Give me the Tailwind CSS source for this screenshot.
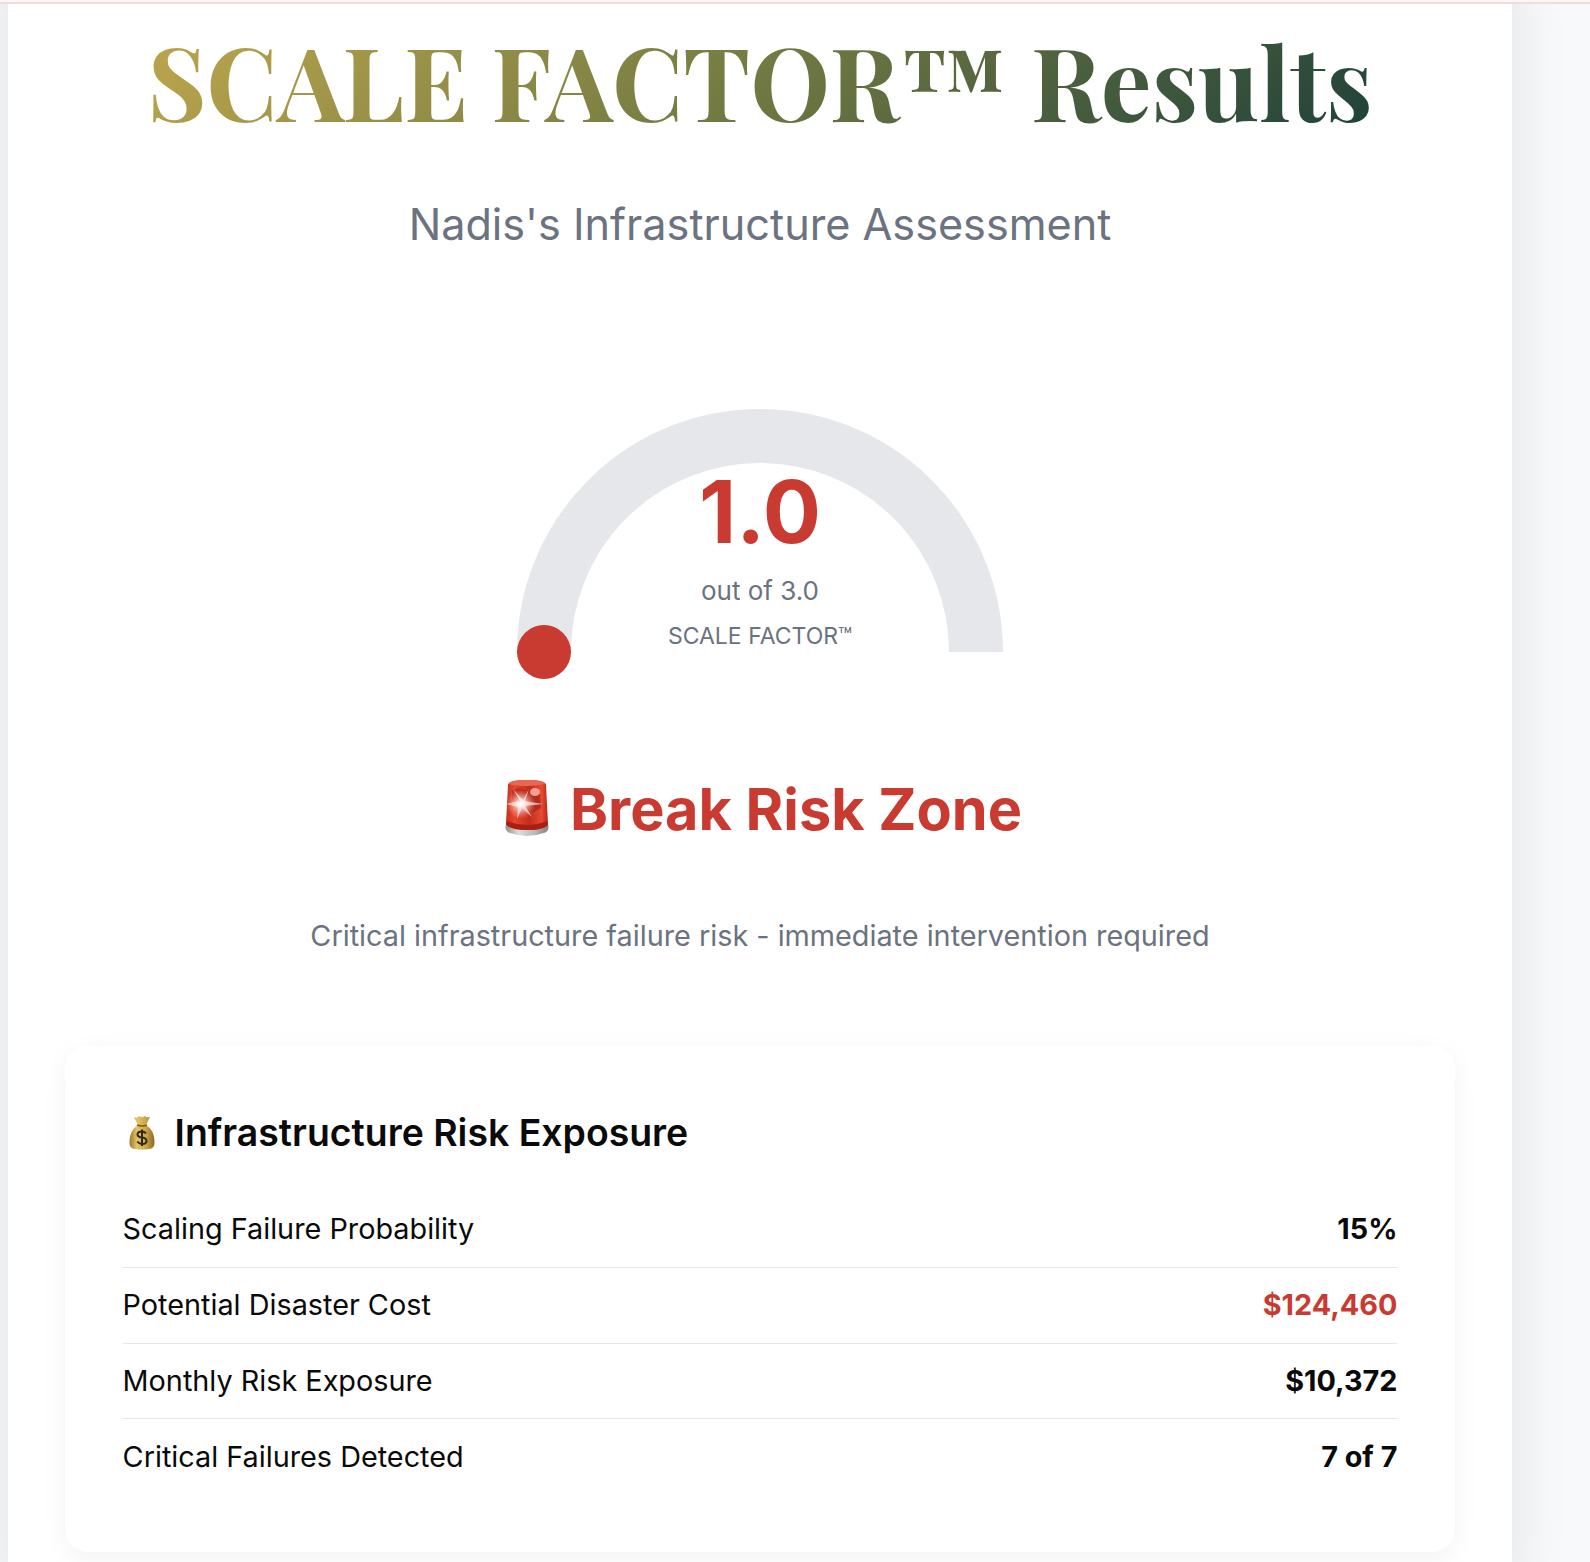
<!DOCTYPE html>
<html lang="en">
<head>
<meta charset="utf-8">
<title>SCALE FACTOR™ Results</title>
<script src="https://cdn.jsdelivr.net/npm/@tailwindcss/browser@4"></script>
</head>
<body class="h-[1562px] overflow-hidden bg-[#f8f9fb] font-[Inter,sans-serif] text-[#0a0a0a]">
<header class="relative z-10 h-1 border-b-2 border-[#f0dde0] bg-[#fdf7f3]"></header>
<main class="-mt-12 ml-2 h-[1606px] w-[1504px] bg-white px-[57px] pt-12 shadow-[0_18px_54px_rgba(0,0,0,0.1)]">
  <h1 class="mb-[53px] bg-[linear-gradient(135deg,#c9ad4e_0%,#727a42_50%,#143a38_100%)] bg-clip-text pt-4 text-center font-['Playfair_Display','Liberation_Serif',serif] text-[100.8px] leading-[121px] font-bold whitespace-nowrap text-transparent">SCALE FACTOR™ Results</h1>
  <p class="text-center text-[43.2px] leading-[60px] text-[#6b7280]">Nadis's Infrastructure Assessment</p>

  <div class="mx-auto mt-[126px] grid h-[320px] w-[540px]">
    <svg class="col-start-1 row-start-1" width="540" height="320" viewBox="0 0 540 320">
      <path d="M54 272A216 216 0 0 1 486 272" fill="none" stroke="#e5e7eb" stroke-width="54"/>
      <circle cx="54" cy="272" r="27" fill="#c93a30"/>
    </svg>
    <div class="col-start-1 row-start-1 pt-[89px] text-center text-[#6b7280]">
      <div class="text-[86.4px] leading-[86px] font-bold text-[#c93a30]">1.0</div>
      <div class="mt-4 text-[26px] leading-[40px]">out of 3.0</div>
      <div class="mt-[7px] text-[23px] leading-[36px]">SCALE FACTOR™</div>
    </div>
  </div>

  <h2 class="mt-[66px] flex items-center justify-center gap-[21px] pl-[7px] text-[57.6px] leading-[86px] font-bold text-[#c93a30]">
    <svg class="-mt-[2px] block" width="44" height="58" viewBox="0 0 44 58">
      <defs>
        <linearGradient id="lamp" x1="0" x2="1"><stop offset="0" stop-color="#c62d18"/><stop offset=".2" stop-color="#e8462e"/><stop offset=".55" stop-color="#c22c1c"/><stop offset=".85" stop-color="#e84a34"/><stop offset="1" stop-color="#b52614"/></linearGradient>
        <linearGradient id="base" x1="0" x2="1"><stop offset="0" stop-color="#8d8f8d"/><stop offset=".3" stop-color="#dcdedb"/><stop offset=".7" stop-color="#b5b8b5"/><stop offset="1" stop-color="#7f817f"/></linearGradient>
        <radialGradient id="glow"><stop offset="0" stop-color="#fff"/><stop offset=".3" stop-color="#ffdcd6" stop-opacity=".85"/><stop offset="1" stop-color="#ff8a76" stop-opacity="0"/></radialGradient>
      </defs>
      <path d="M1 45Q-1 52 5 54Q22 60 39 54Q45 52 43 45Z" fill="url(#base)"/>
      <path d="M3 6Q3 1 22 1Q41 1 41 6L43 45Q40 51 22 51Q4 51 1 45Z" fill="url(#lamp)"/>
      <path d="M2 42Q22 50 42 42L43 45Q40 51 22 51Q4 51 1 45Z" fill="#a91f12"/>
      <path d="M4 5Q5 1 22 1Q39 1 40 5Q32 7 22 7Q10 7 4 5Z" fill="#e86750"/>
      <path d="M7 12Q15 6 22 13Q32 5 35 17L36 29L27 34L14 28L7 20Z" fill="#9c2218" opacity=".6"/>
      <ellipse cx="30" cy="13" rx="5" ry="4" fill="#f0a196"/>
      <circle cx="16" cy="25" r="15" fill="url(#glow)"/>
      <path d="M16 24L8 10L18 21L24 10L20 22L38 25L20 27L27 38L17 29L12 40L13 28L1 25L13 22Z" fill="#fff" opacity=".6"/>
    </svg>
    <span>Break Risk Zone</span>
  </h2>
  <p class="mt-[61px] text-center text-[28.8px] leading-[46px] text-[#6b7280]">Critical infrastructure failure risk - immediate intervention required</p>

  <section class="mt-[87px] h-[506px] rounded-[22px] bg-white px-[57.6px] pt-[57px] shadow-[0_7px_27px_rgba(0,0,0,0.05)]">
    <h3 class="flex items-center gap-[20px] pl-[6px] text-[37.4px] leading-[60px] font-semibold">
      <svg class="-mt-[2px] block" width="26" height="35" viewBox="0 0 26 35">
        <defs><linearGradient id="sack" x1="0" x2="1"><stop offset="0" stop-color="#9a7a2c"/><stop offset=".3" stop-color="#e5c463"/><stop offset=".65" stop-color="#cda746"/><stop offset="1" stop-color="#8c6a22"/></linearGradient></defs>
        <path d="M5 2Q8 4 10 1Q13 3 16 1Q18 3 21 2L17 10Q25 15 25.500 26Q26 34 20 34Q13 35 6 34Q0 34 .5 26Q1 15 9 10Z" fill="url(#sack)"/>
        <path d="M8 10Q13 12 18 10" fill="none" stroke="#765719" stroke-width="1.6"/>
        <path d="M17 18.500Q15.500 16.500 13 16.500Q8.500 16.500 8.500 19.500Q8.500 22 13 22.500Q17.500 23 17.500 26Q17.500 29 13 29Q10 29 8.300 26.500M13 14.500V31" fill="none" stroke="#2d2a1c" stroke-width="2"/>
      </svg>
      <span>Infrastructure Risk Exposure</span>
    </h3>
    <dl class="mt-[29px] text-[28.8px] leading-[46px]">
      <div class="flex justify-between border-b border-[#e5e7eb] py-[14.4px]"><dt>Scaling Failure Probability</dt><dd class="font-bold">15%</dd></div>
      <div class="flex justify-between border-b border-[#e5e7eb] py-[14.4px]"><dt>Potential Disaster Cost</dt><dd class="font-bold text-[#c93a30]">$124,460</dd></div>
      <div class="flex justify-between border-b border-[#e5e7eb] py-[14.4px]"><dt>Monthly Risk Exposure</dt><dd class="font-bold">$10,372</dd></div>
      <div class="flex justify-between py-[14.4px]"><dt>Critical Failures Detected</dt><dd class="font-bold">7 of 7</dd></div>
    </dl>
  </section>
</main>
</body>
</html>
